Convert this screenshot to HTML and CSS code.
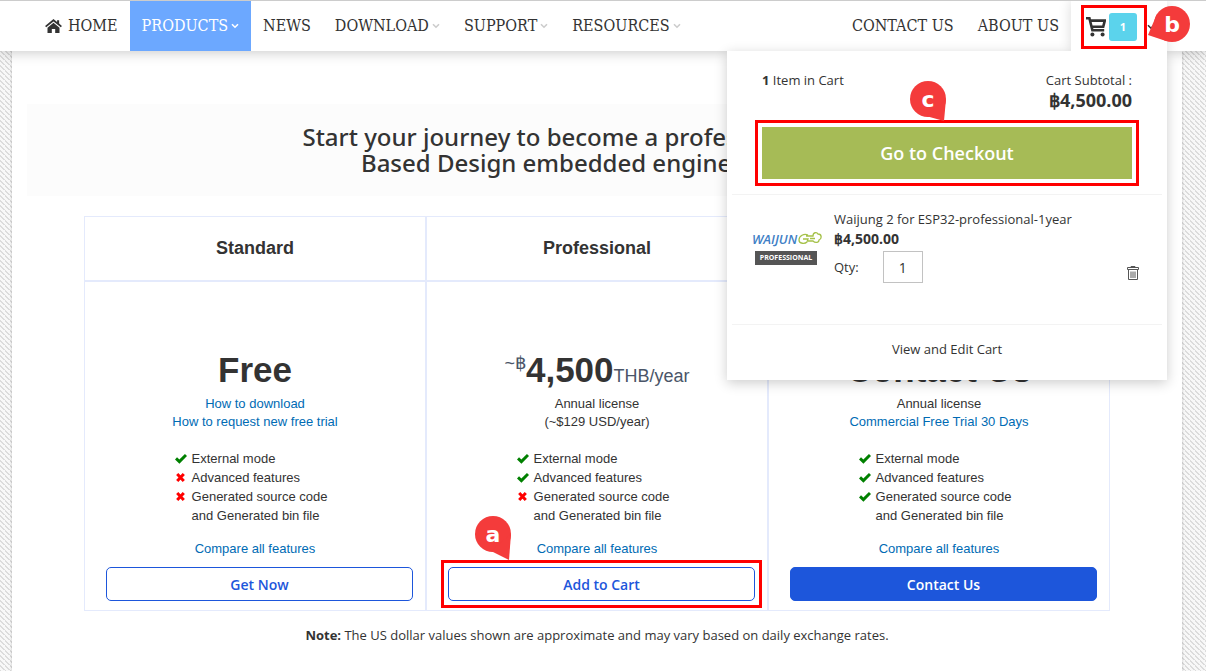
FILE: index.html
```html
<!DOCTYPE html>
<html lang="en">
<head>
    <meta charset="UTF-8">
    <meta name="viewport" content="width=device-width, initial-scale=1.0">
    <title>Waijung 2 for ESP32 - Pricing</title>
    <link rel="stylesheet" href="styles.css">
</head>
<body>

<!-- shared icons -->
<svg class="sprite" aria-hidden="true">
    <symbol id="caret" viewBox="0 0 8 6"><path d="M1 1.2l3 3 3-3" fill="none" stroke="currentColor" stroke-width="1.6"/></symbol>
    <symbol id="check" viewBox="0 0 12 12"><path d="M1 5.4l3.4 3.2L11 2" fill="none" stroke="#008000" stroke-width="3"/></symbol>
    <symbol id="cross" viewBox="0 0 12 12"><path d="M2.2 2l6.6 7M8.800 2L2.200 9" fill="none" stroke="#f00" stroke-width="3"/></symbol>
</svg>

<header class="header">
    <nav class="nav">
        <a href="#"><svg class="home-icon" viewBox="0 0 18 16"><path d="M9 0L0 7.4l1.2 1.4L9 2.6l7.8 6.2L18 7.4l-3-2.5V1.4h-2.2v1.7z"/><path d="M9 4L2.6 9.2V15h4.6v-4.4h3.6V15h4.6V9.2z"/></svg>HOME</a>
        <a href="#" class="active">PRODUCTS<svg class="caret"><use href="#caret"/></svg></a>
        <a href="#">NEWS</a>
        <a href="#">DOWNLOAD<svg class="caret"><use href="#caret"/></svg></a>
        <a href="#">SUPPORT<svg class="caret"><use href="#caret"/></svg></a>
        <a href="#">RESOURCES<svg class="caret"><use href="#caret"/></svg></a>
    </nav>
    <nav class="nav nav-right">
        <a href="#">CONTACT US</a>
        <a href="#">ABOUT US</a>
    </nav>
    <div class="cart">
        <button type="button" class="cart-toggle" aria-label="Shopping cart">
            <span class="cart-summary">
                <svg class="cart-icon" viewBox="0 0 20 20"><path d="M0 1.2h3.4l3 12h11.8M4.2 3.6h14.6l-1.6 6.2H6" fill="none" stroke="#333" stroke-width="2.6"/><circle cx="6.4" cy="17.6" r="2"/><circle cx="16.6" cy="17.6" r="2"/></svg>
                <span class="count">1</span>
            </span>
            <svg class="caret"><use href="#caret"/></svg>
        </button>
        <svg class="callout callout-b" viewBox="0 0 44 36"><circle cx="25" cy="18" r="18"/><path d="M10 8L1 29l18 6z"/><text x="25" y="26">b</text></svg>

        <div class="minicart">
            <div class="totals">
                <p><b>1</b> Item in Cart</p>
                <p class="subtotal">Cart Subtotal :<strong>฿4,500.00</strong></p>
            </div>
            <div class="action">
                <div class="marked"><button type="button" class="checkout">Go to Checkout</button></div>
                <svg class="callout callout-c" viewBox="0 0 36 44"><circle cx="18" cy="18" r="18"/><path d="M36 18l-2 22-18-5z"/><text x="18" y="26">c</text></svg>
            </div>
            <div class="item">
                <svg class="item-logo" viewBox="0 0 70 34">
                    <text class="logo-name" x="0" y="13">WAIJUN</text>
                    <path d="M56 4c-4-2-9 1-9 5s6 4 8 2l1-3h-5M54 5h7c0-4 4-4 5-2 4 0 4 5 1 6 0 3-4 3-6 1h-5M58 7.5h5" fill="none" stroke="#a5c148" stroke-width="1.3"/>
                    <path d="M3 20h62v14H3z" fill="#555"/>
                    <text class="logo-tier" x="34" y="29">PROFESSIONAL</text>
                </svg>
                <div class="item-info">
                    <a href="#">Waijung 2 for ESP32-professional-1year</a>
                    <strong>฿4,500.00</strong>
                    <div class="qty">
                        <label for="qty">Qty:</label>
                        <input type="text" id="qty" value="1">
                    </div>
                </div>
                <button type="button" class="remove" aria-label="Remove item">
                    <svg viewBox="0 0 12 14"><path d="M.5 3.5v-2h11v2zM4 1.5V.5h4v1M1.5 3.5v10h9v-10M4 5.5V12M6 5.5V12M8 5.5V12" fill="none" stroke="#555"/></svg>
                </button>
            </div>
            <a href="#" class="view-cart">View and Edit Cart</a>
        </div>
    </div>
</header>

<main class="page">
    <div class="hero">
        <h1>Start your journey to become a professional Model-<br>Based Design embedded engineer online</h1>
    </div>

    <div class="plans">
        <section class="plan">
            <h2>Standard</h2>
            <div class="plan-body">
                <p class="price">Free</p>
                <p class="terms"><a href="#">How to download</a><br><a href="#">How to request new free trial</a></p>
                <ul>
                    <li><svg><use href="#check"/></svg>External mode</li>
                    <li><svg><use href="#cross"/></svg>Advanced features</li>
                    <li><svg><use href="#cross"/></svg>Generated source code<br>and Generated bin file</li>
                </ul>
                <a href="#">Compare all features</a>
                <div class="buy"><button type="button">Get Now</button></div>
            </div>
        </section>
        <section class="plan">
            <h2>Professional</h2>
            <div class="plan-body">
                <p class="price"><sup>~฿</sup>4,500<small>THB/year</small></p>
                <p class="terms">Annual license<br>(~$129 USD/year)</p>
                <ul>
                    <li><svg><use href="#check"/></svg>External mode</li>
                    <li><svg><use href="#check"/></svg>Advanced features</li>
                    <li><svg><use href="#cross"/></svg>Generated source code<br>and Generated bin file</li>
                </ul>
                <a href="#">Compare all features</a>
                <div class="buy">
                    <div class="marked"><button type="button">Add to Cart</button></div>
                    <svg class="callout callout-a" viewBox="0 0 36 44"><circle cx="18" cy="18" r="18"/><path d="M36 18l-2 26-18-9z"/><text x="18" y="26">a</text></svg>
                </div>
            </div>
        </section>
        <section class="plan">
            <h2>Enterprise</h2>
            <div class="plan-body">
                <p class="price">Contact Us</p>
                <p class="terms">Annual license<br><a href="#">Commercial Free Trial 30 Days</a></p>
                <ul>
                    <li><svg><use href="#check"/></svg>External mode</li>
                    <li><svg><use href="#check"/></svg>Advanced features</li>
                    <li><svg><use href="#check"/></svg>Generated source code<br>and Generated bin file</li>
                </ul>
                <a href="#">Compare all features</a>
                <div class="buy"><button type="button" class="primary">Contact Us</button></div>
            </div>
        </section>
    </div>

    <p class="note"><b>Note:</b> The US dollar values shown are approximate and may vary based on daily exchange rates.</p>
</main>

</body>
</html>
```
FILE: styles.css
```css
* {
    box-sizing: border-box;
}
body {
    margin: 0;
    font-family: "Open Sans", sans-serif;
    font-size: 13px;
    line-height: 18px;
    color: #333;
    background-color: #f8f8f8;
    background-image: linear-gradient(45deg, #f8f8f8 40%, #dcdcdc 40%, #dcdcdc 60%, #f8f8f8 60%);
    background-size: 5px 5px;
}
h1, h2, p, ul {
    margin: 0;
    padding: 0;
}
a {
    color: #006bb4;
    text-decoration: none;
}
button {
    font-family: inherit;
    cursor: pointer;
}
.sprite {
    position: absolute;
    width: 0;
    height: 0;
}

/* header */
.header {
    position: relative;
    z-index: 10;
    display: flex;
    height: 51px;
    padding: 0 39px 0 33px;
    background: #fff;
    border-top: 1px solid #ccc;
    box-shadow: 0 2px 12px rgba(0, 0, 0, 0.2);
}
.nav {
    display: flex;
}
.nav-right {
    margin-left: auto;
}
.nav a {
    display: flex;
    align-items: center;
    padding: 0 12px;
    font-family: "DejaVu Serif Condensed", "DejaVu Serif", serif;
    font-size: 16px;
    color: #333;
}
.nav a.active {
    color: #fff;
    background: #6ca8ff;
}
.caret {
    width: 8px;
    height: 6px;
    margin-left: 3px;
    color: #ccc;
}
.active .caret {
    color: #fff;
}
.home-icon {
    width: 17px;
    height: 15px;
    margin-right: 6px;
    fill: #333;
}
.cart {
    position: relative;
    width: 96px;
}
.cart-toggle {
    position: relative;
    z-index: 2;
    display: flex;
    align-items: center;
    width: 100%;
    height: 50px;
    padding: 2px 0 0 10px;
    background: #fff;
    border: 0;
    box-shadow: 0 0 12px rgba(0, 0, 0, 0.15);
    clip-path: inset(0 -12px);
}
.cart-toggle .caret {
    color: #333;
    margin-left: 0;
}
.cart-summary {
    display: flex;
    align-items: center;
    gap: 3px;
    padding: 5px 7px 5px 2px;
    border: 3px solid #f00;
}
.cart-icon {
    width: 20px;
    height: 20px;
    fill: #333;
}
.count {
    width: 28px;
    height: 28px;
    border-radius: 3px;
    background: #5bd3ec;
    color: #fff;
    font-size: 11px;
    font-weight: 700;
    line-height: 28px;
    text-align: center;
}

/* cart dropdown */
.minicart {
    position: absolute;
    z-index: 1;
    top: 50px;
    right: 0;
    width: 440px;
    padding: 20px 5px 22px;
    background: #fff;
    box-shadow: 0 3px 12px rgba(0, 0, 0, 0.2);
}
.totals {
    display: flex;
    justify-content: space-between;
    padding: 0 30px;
}
.subtotal {
    text-align: right;
}
.subtotal strong {
    display: block;
    font-size: 18px;
    line-height: 22px;
}
.action {
    position: relative;
    padding: 16px 30px 15px;
    border-bottom: 1px solid #f3f3f3;
}
.checkout {
    display: block;
    width: 100%;
    height: 52px;
    background: #a6bb56;
    border: 0;
    color: #fff;
    font-size: 18px;
    font-weight: 600;
}
.marked {
    outline: 3px solid #f00;
    outline-offset: 4px;
}
.item {
    display: flex;
    height: 130px;
    padding: 14px 23px 0 20px;
    border-bottom: 1px solid #f3f3f3;
}
.item-logo {
    width: 70px;
    height: 34px;
    margin: 22px 12px 0 0;
}
.logo-name {
    font: italic 600 13px "Open Sans", sans-serif;
    fill: #3f7fc6;
}
.logo-tier {
    font: 700 7px "Open Sans", sans-serif;
    fill: #fff;
    text-anchor: middle;
}
.item-info {
    flex: 1;
}
.item-info a,
.item-info strong {
    display: block;
    line-height: 20px;
    color: #333;
}
.item-info strong {
    font-size: 14px;
}
.qty {
    display: flex;
    align-items: center;
    gap: 24px;
    padding-top: 2px;
}
.qty input {
    width: 40px;
    height: 32px;
    border: 1px solid #c2c2c2;
    font-family: inherit;
    font-size: 14px;
    color: #333;
    text-align: center;
}
.remove {
    align-self: flex-start;
    margin-top: 57px;
    padding: 0;
    background: none;
    border: 0;
}
.remove svg {
    display: block;
    width: 12px;
    height: 14px;
}
.view-cart {
    display: block;
    padding-top: 15px;
    color: #333;
    text-align: center;
}

/* lettered step markers */
.callout {
    position: absolute;
    z-index: 3;
    width: 36px;
    height: 44px;
    fill: #f43b3b;
}
.callout text {
    font: 700 22px "DejaVu Sans", sans-serif;
    fill: #fff;
    text-anchor: middle;
}
.callout-a {
    left: 48px;
    top: -42px;
}
.callout-b {
    left: 76px;
    top: 5px;
    width: 44px;
    height: 36px;
}
.callout-c {
    left: 178px;
    top: -30px;
}

/* page */
.page {
    margin: 0 24px 0 12px;
    padding: 53px 0 36px;
    background: #fff;
    box-shadow: 0 0 3px rgba(0, 0, 0, 0.2);
}
.hero {
    margin: 0 15px 20px;
    padding: 20px 0;
    background: #fcfcfc;
    text-align: center;
}
.hero h1 {
    font-family: "Noto Sans", "Open Sans", sans-serif;
    font-size: 24px;
    font-weight: 500;
    line-height: 26px;
}
.plans {
    display: grid;
    grid-template-columns: repeat(3, 1fr);
    margin: 0 72px;
    font-family: "Liberation Sans", Arial, sans-serif;
    text-align: center;
}
.plan {
    border: 1px solid #e4eafc;
}
.plan h2 {
    padding: 21px 0;
    border-bottom: 2px solid #e4eafc;
    font-size: 18px;
    line-height: 21px;
}
.price {
    padding: 66px 0 3px;
    font-size: 35px;
    font-weight: 700;
    line-height: 44px;
}
.price sup,
.price small {
    font-size: 18px;
    font-weight: 400;
    line-height: 18px;
    color: #4a5568;
}
.terms {
    padding-bottom: 18px;
}
.plan ul {
    width: fit-content;
    margin: 0 auto 15px;
    padding-right: 8px;
    list-style: none;
    text-align: left;
    line-height: 19px;
}
.plan li {
    padding-left: 17px;
}
.plan li svg {
    float: left;
    width: 12px;
    height: 12px;
    margin: 4px 0 0 -17px;
}
.buy {
    position: relative;
    padding: 9px 12px 9px 21px;
}
.buy button {
    display: block;
    width: 100%;
    height: 34px;
    border: 1px solid #1d56db;
    border-radius: 5px;
    background: #fff;
    color: #1d56db;
    font-family: "Open Sans", sans-serif;
    font-size: 14px;
    font-weight: 600;
}
.buy .primary {
    background: #1d56db;
    color: #fff;
}
.note {
    padding-top: 15px;
    text-align: center;
}
```
